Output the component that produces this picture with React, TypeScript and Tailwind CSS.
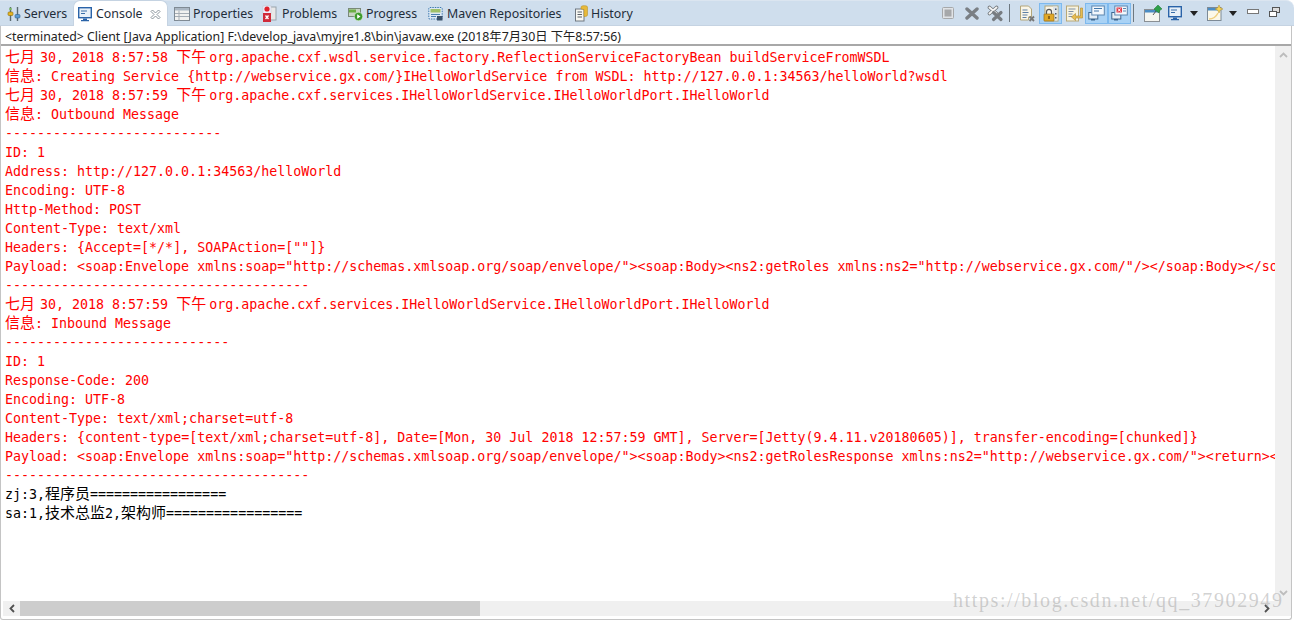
import React from "react";

const ui = "font-['Noto_Sans','Noto_Sans_CJK_SC',sans-serif]";

function ServersIcon() {
  return (
    <svg width="14" height="16" viewBox="0 0 14 16">
      <path d="M3.500 1v14M10.500 1v14" stroke="#5a6a70" strokeWidth="1.400" />
      <rect x="1" y="6" width="5" height="3.500" rx="1" fill="#e6b422" stroke="#8a6d10" strokeWidth=".6" />
      <rect x="8" y="8.500" width="5" height="3.500" rx="1" fill="#5b9bd5" stroke="#2f5f8f" strokeWidth=".6" />
      <circle cx="3.500" cy="3" r="1.300" fill="#7bb661" />
    </svg>
  );
}
function MonitorIcon() {
  return (
    <svg width="14" height="15" viewBox="0 0 14 15">
      <rect x=".7" y=".7" width="12.600" height="10" fill="#e8f0f8" stroke="#2a63a8" strokeWidth="1.400" />
      <path d="M3 4h6M3 6.500h4" stroke="#3a6ea8" strokeWidth="1.200" />
      <path d="M5 11.500h4v1.500h2v1.200H3V13h2z" fill="#2a63a8" />
    </svg>
  );
}
function CloseOutline() {
  return (
    <svg width="11" height="11" viewBox="0 0 11 11">
      <path d="M1 2.500L2.500 1 5.500 4 8.500 1 10 2.500 7 5.500 10 8.500 8.500 10 5.500 7 2.500 10 1 8.500 4 5.500z" fill="#fff" stroke="#7d8890" strokeWidth=".9" />
    </svg>
  );
}
function TableIcon() {
  return (
    <svg width="16" height="14" viewBox="0 0 16 14">
      <rect x=".5" y=".5" width="15" height="13" fill="#f2f2f0" stroke="#7f8a94" />
      <rect x="1" y="1" width="14" height="2.500" fill="#aab7c4" />
      <path d="M5 3.500v10M1 6.500h14M1 9.500h14" stroke="#a5adb5" />
    </svg>
  );
}
function ProblemsIcon() {
  return (
    <svg width="16" height="18" viewBox="0 0 16 18">
      <rect x="8" y="2" width="6" height="13" fill="#e8e8e8" stroke="#9aa4ac" />
      <rect x="1" y="1" width="8" height="8" fill="#eef" stroke="#c8c8d0" strokeWidth=".6" />
      <circle cx="5" cy="4" r="2.600" fill="#e0222a" />
      <rect x="1" y="8" width="8" height="9" fill="#cf2a3a" />
      <path d="M3.500 10.500l3 3.500M6.500 10.500l-3 3.500" stroke="#fff" strokeWidth="1.300" />
    </svg>
  );
}
function ProgressIcon() {
  return (
    <svg width="15" height="14" viewBox="0 0 15 14">
      <rect x=".5" y="1.500" width="12" height="8" fill="#c9d4c4" stroke="#7a8a78" />
      <rect x="1" y="2.500" width="7" height="3" fill="#6cae45" />
      <circle cx="10.500" cy="9.500" r="4.200" fill="#3e9a2c" stroke="#dff0d8" strokeWidth=".6" />
      <path d="M9.200 7.300l3.300 2.200-3.300 2.200z" fill="#fff" />
    </svg>
  );
}
function MavenIcon() {
  return (
    <svg width="15" height="15" viewBox="0 0 15 15">
      <rect x=".8" y="1.500" width="13.400" height="11.500" rx="1" fill="#dce9f5" stroke="#3e79b0" strokeDasharray="1.500 1" />
      <rect x="2.500" y="3" width="10" height="3.500" fill="#9ec06a" />
      <path d="M3 8.500h9M3 10.500h5" stroke="#4a7fb0" />
      <rect x="9" y="10" width="5.500" height="4.500" fill="#39516b" />
    </svg>
  );
}
function HistoryIcon() {
  return (
    <svg width="13" height="17" viewBox="0 0 13 17">
      <rect x=".5" y="4" width="8.500" height="12" fill="#f7f7f2" stroke="#6e7780" />
      <path d="M2.500 7h4.500M2.500 9.500h4.500M2.500 12h4.500" stroke="#5a6068" />
      <path d="M6 2c0-1.800 6.500-1.800 6.500 0v8c0 1-1.500 1.500-3.500 1.500V4.500L6 4z" fill="#e7b93a" stroke="#b08a20" strokeWidth=".5" />
    </svg>
  );
}
function StopIcon() {
  return (
    <svg width="12" height="12" viewBox="0 0 12 12">
      <rect x=".5" y=".5" width="11" height="11" rx="1" fill="#e0e3e6" stroke="#a6a8aa" />
      <rect x="2.500" y="2.500" width="7" height="7" fill="#a6a8aa" />
    </svg>
  );
}
function GrayX() {
  return (
    <svg width="14" height="13" viewBox="0 0 14 13">
      <path d="M2 2l10 9M12 2L2 11" stroke="#7a7f84" strokeWidth="3.400" strokeLinecap="round" />
    </svg>
  );
}
function GrayXX() {
  return (
    <svg width="17" height="17" viewBox="0 0 17 17">
      <path d="M2.500 2.500l7 6M9.500 2.500l-7 6" stroke="#6f7478" strokeWidth="3.600" strokeLinecap="round" />
      <path d="M2.500 2.500l7 6M9.500 2.500l-7 6" stroke="#f4f4f4" strokeWidth="2" strokeLinecap="round" />
      <path d="M6.500 7.500l7.500 7M14 7.500l-7.500 7" stroke="#777c81" strokeWidth="3.200" strokeLinecap="round" />
    </svg>
  );
}
function ClearDoc() {
  return (
    <svg width="17" height="17" viewBox="0 0 17 17">
      <path d="M1.500 1h8l3 3v8h-3v3h-8z" fill="#faf6e8" stroke="#b3a67a" />
      <path d="M3.500 5h5M3.500 7.500h6M3.500 10h5M3.500 12.500h4" stroke="#5d7fa5" />
      <path d="M10.500 11.500l4.500 4.500M15 11.500L10.500 16" stroke="#777" strokeWidth="1.800" />
    </svg>
  );
}
function LockDoc() {
  return (
    <svg width="16" height="17" viewBox="0 0 16 17">
      <rect x="2" y="1" width="13" height="15" fill="#f8f5e8" stroke="#b3a67a" />
      <rect x="10" y="1.500" width="4.500" height="14" fill="#dfe5ea" />
      <path d="M12 3.500h1.500v1.500H12zM12 8h1.500v1.500H12zM12 12h1.500v1.500H12z" fill="#4a5a6a" />
      <path d="M3.500 9V6.800a2.500 2.500 0 015 0V9" fill="none" stroke="#555" strokeWidth="1.200" />
      <rect x="1" y="9" width="10" height="7" rx=".5" fill="#e0a828" stroke="#9a701a" strokeWidth=".7" />
      <rect x="5.200" y="11" width="1.600" height="3" fill="#7a5510" />
    </svg>
  );
}
function ScrollDoc() {
  return (
    <svg width="17" height="17" viewBox="0 0 17 17">
      <rect x=".5" y="1" width="12" height="15" fill="#f8f3e0" stroke="#b9a877" />
      <path d="M2.500 4h7M2.500 6.500h5M2.500 9h4M2.500 11.500h4" stroke="#7f90a5" />
      <path d="M14.500 3v8H9.500V8.500L5.500 12l4 3.500V13h7V3z" fill="#e8bc50" stroke="#b08a2a" strokeWidth=".6" />
    </svg>
  );
}
function ChatMonitor({ err = false }: { err?: boolean }) {
  return (
    <svg width="17" height="17" viewBox="0 0 17 17">
      <rect x=".8" y="7.500" width="9" height="6.500" fill="#e5eef6" stroke="#3d668e" />
      <path d="M3 14h4v1.500H3z" fill="#3d668e" />
      <rect x="3.800" y="1" width="12.500" height="9" fill="#f2f7fc" stroke="#5c86b0" />
      {err ? (
        <>
          <rect x="5.500" y="2.500" width="5.500" height="5" fill="#e03a48" />
          <path d="M7 3.500l2.500 3M9.500 3.500L7 6.500" stroke="#fff" />
          <path d="M12 3.500h3M12 6h3" stroke="#5c86b0" />
        </>
      ) : (
        <path d="M6 3.500h8M6 6h5" stroke="#4478aa" strokeWidth="1.200" />
      )}
    </svg>
  );
}
function PinWin() {
  return (
    <svg width="18" height="17" viewBox="0 0 18 17">
      <rect x=".5" y="4.500" width="15" height="12" fill="#f5f5f0" stroke="#8a8f94" />
      <rect x="1" y="5" width="14" height="2.500" fill="#4a8cc4" />
      <path d="M9 10l3-4" stroke="#555" />
      <path d="M10 4l4-4 4 4-2 1-1 3-4-3z" fill="#2fa04a" stroke="#1a7030" strokeWidth=".5" />
    </svg>
  );
}
function NewWin() {
  return (
    <svg width="16" height="16" viewBox="0 0 16 16">
      <rect x=".5" y="2.500" width="13.500" height="13" fill="#fbf8ea" stroke="#7d8a96" />
      <rect x="1" y="3" width="12.500" height="2.500" fill="#4a8cc4" />
      <path d="M2 14c4 0 7-2 9-6" stroke="#f0d080" strokeWidth="1.500" fill="none" />
      <path d="M12 0l1.200 2.800L16 4l-2.800 1.200L12 8l-1.200-2.800L8 4l2.800-1.200z" fill="#f5d45a" stroke="#b08a2a" strokeWidth=".5" />
    </svg>
  );
}
function Caret() {
  return (
    <svg width="8" height="5" viewBox="0 0 8 5">
      <path d="M0 0h8L4 5z" fill="#222" />
    </svg>
  );
}
function MinIcon() {
  return <div className="w-[12px] h-[5px] border border-[#777] bg-white" />;
}
function RestoreIcon() {
  return (
    <svg width="11" height="10" viewBox="0 0 11 10">
      <rect x="3.500" y=".5" width="7" height="5" fill="#ddd" stroke="#555" />
      <rect x=".5" y="4.500" width="7" height="5" fill="#fff" stroke="#555" />
    </svg>
  );
}

function Tab({ icon, label, className }: { icon: React.ReactNode; label: string; className: string }) {
  return (
    <div className={`flex items-center h-full shrink-0 pt-[1px] ${className}`}>
      {icon}
      <span className="text-[12.4px] text-[#1f2d3a] mt-[1px]">{label}</span>
    </div>
  );
}

function C({ children }: { children: React.ReactNode }) {
  return <span className="text-[15px]">{children}</span>;
}

function Line({ children, black = false }: { children: React.ReactNode; black?: boolean }) {
  return <div className={`h-[19px] leading-[19px] ${black ? "text-black" : "text-[#ff0000]"}`}>{children}</div>;
}

function Stamp({ time }: { time: string }) {
  return (
    <>
      <C>七月</C>
      <span className="ml-[5px]">30, 2018 {time} </span>
      <C>下午</C>
      <span className="ml-[3px]" />
    </>
  );
}

function App() {
  return (
    <div className={`relative w-[1294px] h-[620px] overflow-hidden bg-white flex flex-col ${ui}`}>
      <div className="h-[26px] shrink-0 flex items-stretch bg-[#cfdeed] border-t border-[#dbe5f0] border-b border-b-[#c5d3e2] rounded-tr-[8px]">
        <Tab className="pl-[7px] w-[73px] gap-[3px]" icon={<ServersIcon />} label="Servers" />
        <div className="flex items-center h-[26px] w-[95px] shrink-0 bg-white rounded-t-[7px] border-x border-t border-[#c5d3e2] -mt-px pl-[4px] pt-[1px]">
          <MonitorIcon />
          <span className="ml-[4px] mt-[1px] text-[12.4px] text-[#1f2d3a]">Console</span>
          <span className="ml-[7px] flex"><CloseOutline /></span>
        </div>
        <Tab className="pl-[6px] w-[94px] gap-[3px]" icon={<TableIcon />} label="Properties" />
        <Tab className="w-[86px] gap-[4px]" icon={<ProblemsIcon />} label="Problems" />
        <Tab className="w-[80px] gap-[3px]" icon={<ProgressIcon />} label="Progress" />
        <Tab className="w-[147px] gap-[4px]" icon={<MavenIcon />} label="Maven Repositories" />
        <Tab className="gap-[3px]" icon={<HistoryIcon />} label="History" />
        <div className="ml-auto flex items-center pr-[14px] h-full">
          <div className="flex"><StopIcon /></div>
          <div className="flex ml-[11px]"><GrayX /></div>
          <div className="flex ml-[8px]"><GrayXX /></div>
          <div className="w-px h-[18px] bg-[#6e7880] ml-[5px]" />
          <div className="flex ml-[9px]"><ClearDoc /></div>
          <div className="flex items-center justify-center ml-[3px] w-[23px] h-[21px] bg-[#a9d2f5] border border-[#7db9ee]"><LockDoc /></div>
          <div className="flex ml-[4px]"><ScrollDoc /></div>
          <div className="flex items-center justify-center ml-[2px] w-[23px] h-[21px] bg-[#a9d2f5] border border-[#7db9ee]"><ChatMonitor /></div>
          <div className="flex items-center justify-center w-[23px] h-[21px] bg-[#a9d2f5] border border-[#7db9ee]"><ChatMonitor err /></div>
          <div className="w-px h-[18px] bg-[#6e7880] ml-[2px]" />
          <div className="flex ml-[10px]"><PinWin /></div>
          <div className="flex ml-[6px]"><MonitorIcon /></div>
          <div className="flex ml-[8px]"><Caret /></div>
          <div className="flex ml-[9px]"><NewWin /></div>
          <div className="flex ml-[6px]"><Caret /></div>
          <div className="flex ml-[10px] -mt-[4px]"><MinIcon /></div>
          <div className="flex ml-[10px] -mt-[2px]"><RestoreIcon /></div>
        </div>
      </div>

      <div className="flex-1 min-h-0 flex flex-col mr-[2px] pb-[3px] border-x border-b border-[#c4c4c4] rounded-b-[3px]">
        <div className="h-[20px] shrink-0 leading-[21px] pl-[4px] text-[12.33px] text-[#222] border-b-2 border-[#a8a8a8] whitespace-pre">
          {"<terminated> Client [Java Application] F:\\develop_java\\myjre1.8\\bin\\javaw.exe (2018年7月30日 下午8:57:56)"}
        </div>
        <div className="flex-1 min-h-0 flex">
          <div className="flex-1 min-w-0 flex flex-col">
            <div className="flex-1 min-h-0 overflow-hidden pl-[4px] pt-[2px] whitespace-pre text-[13.3px] font-['DejaVu_Sans_Mono','Noto_Sans_CJK_SC',monospace]">
              <Line><Stamp time="8:57:58" />org.apache.cxf.wsdl.service.factory.ReflectionServiceFactoryBean buildServiceFromWSDL</Line>
              <Line><C>信息</C>: Creating Service {"{http://webservice.gx.com/}"}IHelloWorldService from WSDL: http://127.0.0.1:34563/helloWorld?wsdl</Line>
              <Line><Stamp time="8:57:59" />org.apache.cxf.services.IHelloWorldService.IHelloWorldPort.IHelloWorld</Line>
              <Line><C>信息</C>: Outbound Message</Line>
              <Line>---------------------------</Line>
              <Line>ID: 1</Line>
              <Line>Address: http://127.0.0.1:34563/helloWorld</Line>
              <Line>Encoding: UTF-8</Line>
              <Line>Http-Method: POST</Line>
              <Line>Content-Type: text/xml</Line>
              <Line>Headers: {'{Accept=[*/*], SOAPAction=[""]}'}</Line>
              <Line>{'Payload: <soap:Envelope xmlns:soap="http://schemas.xmlsoap.org/soap/envelope/"><soap:Body><ns2:getRoles xmlns:ns2="http://webservice.gx.com/"/></soap:Body></soap:Envelope>'}</Line>
              <Line>--------------------------------------</Line>
              <Line><Stamp time="8:57:59" />org.apache.cxf.services.IHelloWorldService.IHelloWorldPort.IHelloWorld</Line>
              <Line><C>信息</C>: Inbound Message</Line>
              <Line>----------------------------</Line>
              <Line>ID: 1</Line>
              <Line>Response-Code: 200</Line>
              <Line>Encoding: UTF-8</Line>
              <Line>Content-Type: text/xml;charset=utf-8</Line>
              <Line>Headers: {"{content-type=[text/xml;charset=utf-8], Date=[Mon, 30 Jul 2018 12:57:59 GMT], Server=[Jetty(9.4.11.v20180605)], transfer-encoding=[chunked]}"}</Line>
              <Line>{'Payload: <soap:Envelope xmlns:soap="http://schemas.xmlsoap.org/soap/envelope/"><soap:Body><ns2:getRolesResponse xmlns:ns2="http://webservice.gx.com/"><return><id>'}</Line>
              <Line>--------------------------------------</Line>
              <Line black>zj:3,<C>程序员</C>=================</Line>
              <Line black>sa:1,<C>技术总监</C>2,<C>架构师</C>=================</Line>
            </div>
            <div className="h-[15px] shrink-0 pl-[2px] bg-white">
              <div className="h-full bg-[#f0f0f0] flex items-center">
                <div className="w-[17px] flex justify-center shrink-0">
                  <svg width="6" height="9" viewBox="0 0 6 9"><path d="M5 1L1.500 4.500 5 8" fill="none" stroke="#505050" strokeWidth="1.800" /></svg>
                </div>
                <div className="w-[460px] h-full bg-[#cdcdcd] shrink-0" />
                <div className="ml-auto w-[17px] flex justify-center shrink-0">
                  <svg width="6" height="9" viewBox="0 0 6 9"><path d="M1 1l3.500 3.500L1 8" fill="none" stroke="#505050" strokeWidth="1.800" /></svg>
                </div>
              </div>
            </div>
          </div>
          <div className="w-[16px] shrink-0 bg-[#f0f0f0] flex flex-col items-center justify-between pt-[6px] pb-[20px]">
            <svg width="9" height="6" viewBox="0 0 9 6"><path d="M1 5l3.500-3.500L8 5" fill="none" stroke="#bdbdbd" strokeWidth="1.800" /></svg>
            <svg width="9" height="6" viewBox="0 0 9 6"><path d="M1 1l3.500 3.500L8 1" fill="none" stroke="#bdbdbd" strokeWidth="1.800" /></svg>
          </div>
        </div>
      </div>

      <div className="absolute left-[953px] top-[588px] text-[20px] leading-[24px] tracking-[1.6px] text-[#9a9a9a]/45 font-['Liberation_Serif',serif] whitespace-pre">
        https://blog.csdn.net/qq_37902949
      </div>
    </div>
  );
}

export default App;
